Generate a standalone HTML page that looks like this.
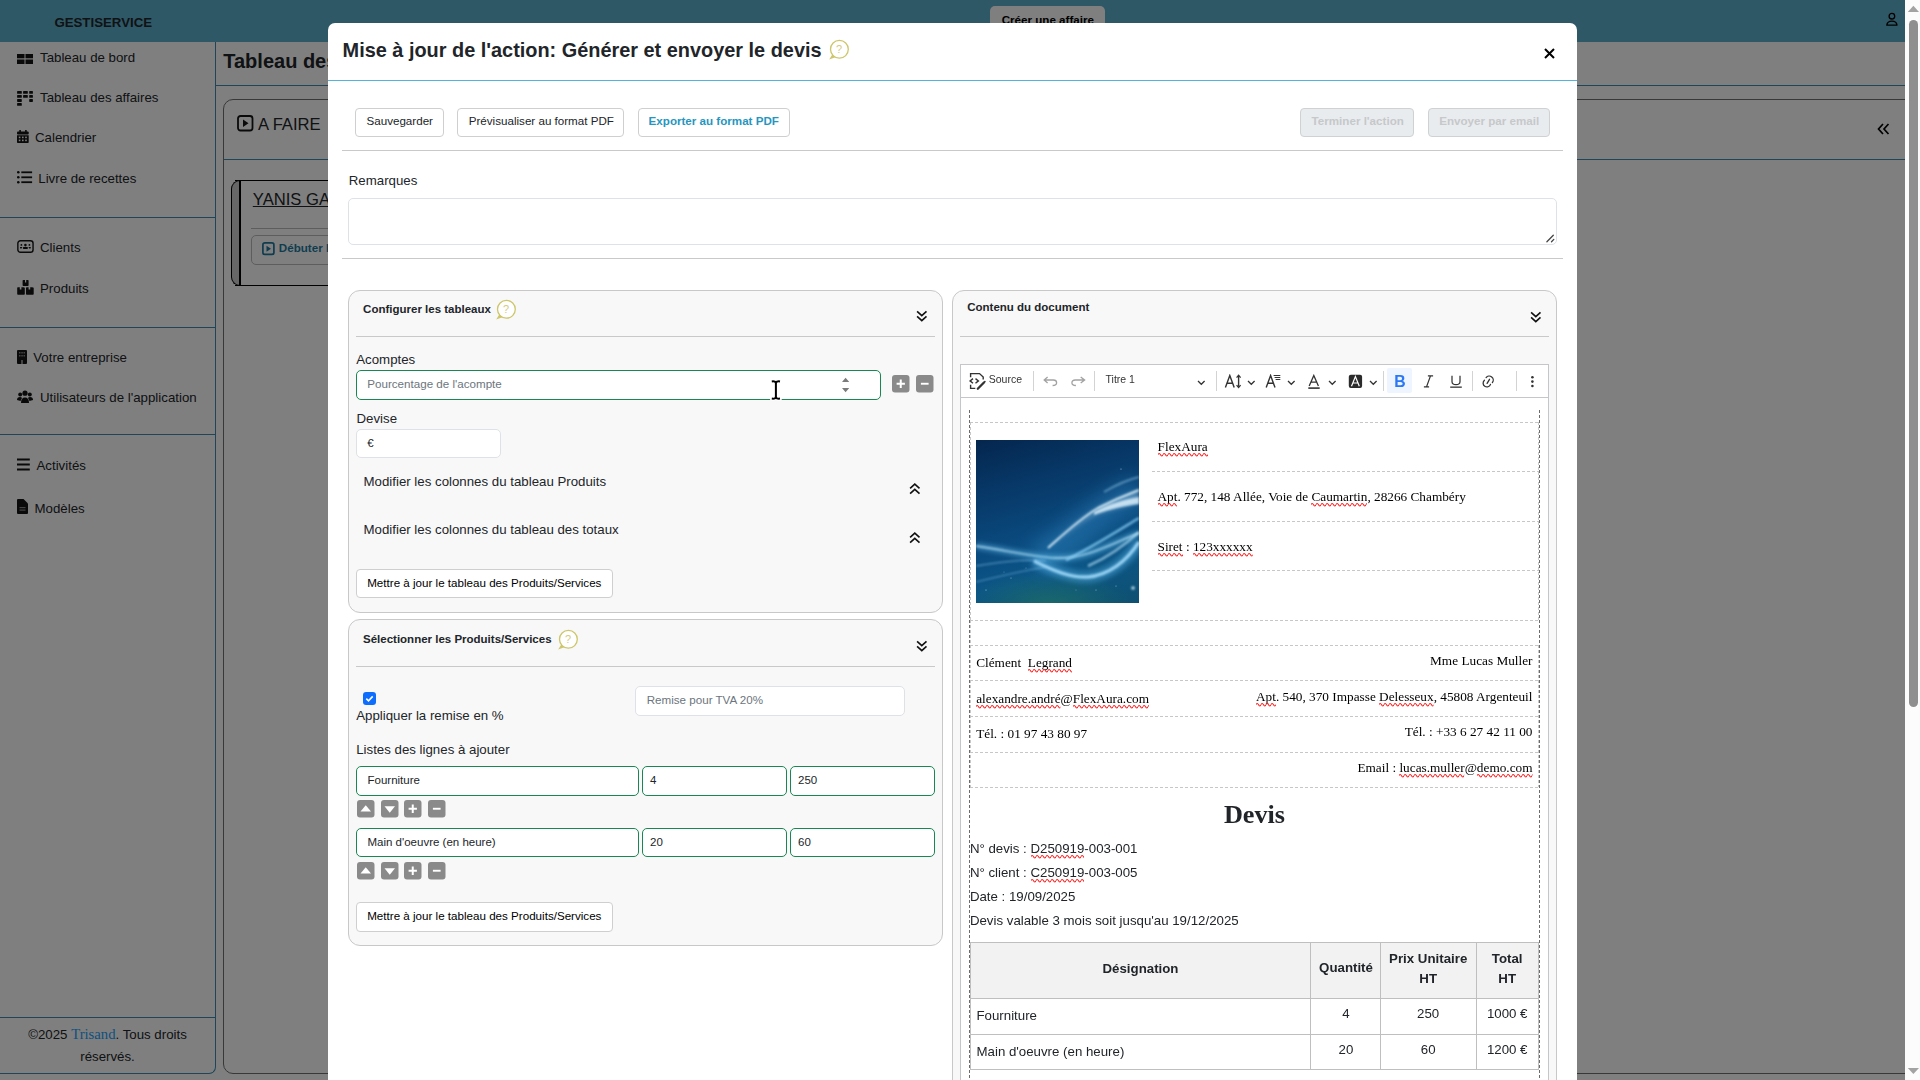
<!DOCTYPE html>
<html><head><meta charset="utf-8"><title>Gestiservice</title>
<style>
html,body{margin:0;padding:0;width:1920px;height:1080px;overflow:hidden;background:#fff;}
body{position:relative;font-family:"Liberation Sans",sans-serif;}
.t{position:absolute;white-space:nowrap;}
.r{position:absolute;box-sizing:border-box;}
.sp{position:relative;}
.wv{position:absolute;left:0;top:14.1px;width:100%;height:4px;overflow:hidden;}
</style></head><body>
<svg width="0" height="0" style="position:absolute;left:0;top:0"><defs><pattern id="wv" width="5" height="4" patternUnits="userSpaceOnUse"><path d="M-0.2 1.6 C0.8 0.2 1.7 0.2 2.5 1.8 C3.3 3.4 4.2 3.4 5.2 1.6" stroke="#ff2020" stroke-width="1.1" fill="none"/></pattern></defs></svg>
<div class="r" style="left:0px;top:0px;width:1905px;height:1080px;background:#fff"></div>
<div class="r" style="left:0px;top:0px;width:1905px;height:42px;background:#5cb0cc"></div>
<div class="t " style="left:54.40px;top:14.90px;font-size:13.25px;line-height:16px;font-weight:700;color:#212529;font-family:'Liberation Sans', sans-serif;">GESTISERVICE</div>
<div class="r" style="left:990px;top:6px;width:115px;height:34px;background:#fff;border-radius:5px"></div>
<div class="t " style="left:1001.70px;top:13.30px;font-size:11.62px;line-height:14px;font-weight:700;color:#000;font-family:'Liberation Sans', sans-serif;">Créer une affaire</div>
<svg class="r" style="left:1884px;top:11px;" width="16" height="17" viewBox="0 0 16 17"><circle cx="7.9" cy="5.2" r="2.8" fill="none" stroke="#000" stroke-width="1.3"/><path d="M2.8 14.2 Q3.3 10.2 7.9 10.2 Q12.5 10.2 13 14.2 Z" fill="none" stroke="#000" stroke-width="1.3" stroke-linejoin="round"/></svg>
<div class="r" style="left:-10px;top:42px;width:226px;height:1032px;border:1px solid #3c8cb0;border-top:none;border-radius:0 0 7px 0"></div>
<div class="r" style="left:0px;top:217px;width:215px;height:1px;background:#3c8cb0"></div>
<div class="r" style="left:0px;top:327px;width:215px;height:1px;background:#3c8cb0"></div>
<div class="r" style="left:0px;top:434px;width:215px;height:1px;background:#3c8cb0"></div>
<div class="r" style="left:0px;top:1017px;width:215px;height:1px;background:#3c8cb0"></div>
<div class="t " style="left:40.00px;top:50.20px;font-size:13.28px;line-height:16px;font-weight:400;color:#212529;font-family:'Liberation Sans', sans-serif;">Tableau de bord</div>
<div class="t " style="left:40.00px;top:90.20px;font-size:13.28px;line-height:16px;font-weight:400;color:#212529;font-family:'Liberation Sans', sans-serif;">Tableau des affaires</div>
<div class="t " style="left:35.00px;top:129.80px;font-size:13.28px;line-height:16px;font-weight:400;color:#212529;font-family:'Liberation Sans', sans-serif;">Calendrier</div>
<div class="t " style="left:38.25px;top:171.05px;font-size:13.28px;line-height:16px;font-weight:400;color:#212529;font-family:'Liberation Sans', sans-serif;">Livre de recettes</div>
<div class="t " style="left:40.00px;top:239.80px;font-size:13.28px;line-height:16px;font-weight:400;color:#212529;font-family:'Liberation Sans', sans-serif;">Clients</div>
<div class="t " style="left:40.00px;top:281.05px;font-size:13.28px;line-height:16px;font-weight:400;color:#212529;font-family:'Liberation Sans', sans-serif;">Produits</div>
<div class="t " style="left:33.25px;top:349.80px;font-size:13.28px;line-height:16px;font-weight:400;color:#212529;font-family:'Liberation Sans', sans-serif;">Votre entreprise</div>
<div class="t " style="left:40.00px;top:390.30px;font-size:13.28px;line-height:16px;font-weight:400;color:#212529;font-family:'Liberation Sans', sans-serif;">Utilisateurs de l'application</div>
<div class="t " style="left:36.50px;top:458.30px;font-size:13.28px;line-height:16px;font-weight:400;color:#212529;font-family:'Liberation Sans', sans-serif;">Activités</div>
<div class="t " style="left:34.50px;top:501.30px;font-size:13.28px;line-height:16px;font-weight:400;color:#212529;font-family:'Liberation Sans', sans-serif;">Modèles</div>
<svg class="r" style="left:17px;top:54px;" width="16" height="10" viewBox="0 0 16 10"><rect x="0" y="0" width="7.5" height="4.3" fill="#141414"/><rect x="8.5" y="0" width="7.5" height="4.3" fill="#141414"/><rect x="0" y="5.5" width="7.5" height="4.5" fill="#141414"/><rect x="8.5" y="5.5" width="7.5" height="4.5" fill="#141414"/></svg>
<svg class="r" style="left:17px;top:90px;" width="16" height="16" viewBox="0 0 16 16"><g fill="#141414"><rect x="0.1" y="0.9" width="4.7" height="2.9" rx="0.6"/><rect x="6.1" y="0.9" width="4.7" height="2.9" rx="0.6"/><rect x="12.2" y="0.9" width="3.7" height="2.9" rx="0.6"/><rect x="0.1" y="5" width="4.7" height="2.8" rx="0.6"/><rect x="6.1" y="5" width="4.7" height="2.8" rx="0.6"/><rect x="12.2" y="5" width="3.7" height="2.8" rx="0.6"/><rect x="0.1" y="9.1" width="4.7" height="2.8" rx="0.6"/><rect x="12.2" y="9.1" width="3.7" height="2.8" rx="0.6"/><rect x="0.1" y="13.1" width="4.7" height="2.7" rx="0.6"/></g></svg>
<svg class="r" style="left:17px;top:130px;" width="12" height="14" viewBox="0 0 12 14"><rect x="2.3" y="0" width="1.6" height="3" fill="#141414"/><rect x="8.1" y="0" width="1.6" height="3" fill="#141414"/><rect x="0" y="1.6" width="11.7" height="3" rx="1" fill="#141414"/><path d="M0 5.3H11.7V12.2Q11.7 13 10.9 13H0.8Q0 13 0 12.2Z" fill="#141414"/><g fill="#fff"><rect x="1.8" y="6.6" width="1.6" height="1.6"/><rect x="5" y="6.6" width="1.6" height="1.6"/><rect x="8.2" y="6.6" width="1.6" height="1.6"/><rect x="1.8" y="9.6" width="1.6" height="1.6"/><rect x="5" y="9.6" width="1.6" height="1.6"/><rect x="8.2" y="9.6" width="1.6" height="1.6"/></g></svg>
<svg class="r" style="left:17px;top:171px;" width="16" height="13" viewBox="0 0 16 13"><circle cx="1.3" cy="1.3" r="1.3" fill="#141414"/><circle cx="1.3" cy="6.3" r="1.3" fill="#141414"/><circle cx="1.3" cy="11.2" r="1.3" fill="#141414"/><rect x="4.3" y="0.4" width="10.8" height="1.8" fill="#141414"/><rect x="4.3" y="5.4" width="10.8" height="1.8" fill="#141414"/><rect x="4.3" y="10.3" width="10.8" height="1.8" fill="#141414"/></svg>
<svg class="r" style="left:17px;top:239px;" width="17" height="15" viewBox="0 0 17 15"><rect x="0.85" y="1.75" width="15.2" height="11.5" rx="2.6" fill="none" stroke="#141414" stroke-width="1.4"/><g fill="#141414"><circle cx="8.4" cy="6.1" r="1.3"/><circle cx="4.4" cy="5.9" r="0.9"/><circle cx="12.4" cy="5.9" r="0.9"/><rect x="5.9" y="8" width="5" height="2" rx="0.8"/><path d="M3 8H5.3L4.6 9.6H3.2Z"/><path d="M11.5 8H13.8L13.6 9.6H12.2Z"/></g></svg>
<svg class="r" style="left:17px;top:279px;" width="17" height="17" viewBox="0 0 17 17"><g fill="#141414"><path d="M5.6 1.6Q5.6 1 6.4 1H8V3.4H9.2V1H10.8Q11.6 1 11.6 1.6V6.2Q11.6 7 10.8 7H6.4Q5.6 7 5.6 6.2Z"/><path d="M0.2 8.8Q0.2 8.2 1 8.2H2.8V10.6H4.4V8.2H6.2Q7.8 8.2 7.8 9V15Q7.8 15.8 7 15.8H1Q0.2 15.8 0.2 15Z"/><path d="M9 9Q9 8.2 9.8 8.2H11.6V10.6H13.2V8.2H15Q16.7 8.2 16.7 9V15Q16.7 15.8 15.9 15.8H9.8Q9 15.8 9 15Z"/></g></svg>
<svg class="r" style="left:17px;top:350px;" width="10" height="14" viewBox="0 0 10 14"><rect x="0" y="0" width="10" height="14" rx="1" fill="#141414"/><g fill="#888"><rect x="2" y="2" width="1.5" height="1.5"/><rect x="4.3" y="2" width="1.5" height="1.5"/><rect x="6.5" y="2" width="1.5" height="1.5"/><rect x="2" y="5" width="1.5" height="1.5"/><rect x="4.3" y="5" width="1.5" height="1.5"/><rect x="6.5" y="5" width="1.5" height="1.5"/><rect x="4" y="10" width="2" height="4"/></g></svg>
<svg class="r" style="left:17px;top:390px;" width="16" height="14" viewBox="0 0 16 14"><circle cx="8" cy="3.2" r="2.6" fill="#141414"/><circle cx="3.2" cy="4.5" r="2" fill="#141414"/><circle cx="12.8" cy="4.5" r="2" fill="#141414"/><path d="M4 13Q4 7.5 8 7.5Q12 7.5 12 13Z" fill="#141414"/><path d="M0 10Q0 7 3 7Q4.5 7 5 8L3.5 11Z" fill="#141414"/><path d="M16 10Q16 7 13 7Q11.5 7 11 8L12.5 11Z" fill="#141414"/></svg>
<svg class="r" style="left:17px;top:458px;" width="13" height="13" viewBox="0 0 13 13"><rect x="0" y="0.5" width="12.8" height="2" fill="#141414"/><rect x="0" y="5.5" width="12.8" height="2" fill="#141414"/><rect x="0" y="10.5" width="12.8" height="2" fill="#141414"/></svg>
<svg class="r" style="left:17px;top:499px;" width="11" height="15" viewBox="0 0 11 15"><path d="M0 1Q0 0 1 0H6.5L11 4.5V14Q11 15 10 15H1Q0 15 0 14Z" fill="#141414"/><g fill="#888"><rect x="2.5" y="8" width="6" height="1.2"/><rect x="2.5" y="10.5" width="6" height="1.2"/></g></svg>
<div class="t" style="left:0;top:1023.2px;width:215px;text-align:center;font-size:13.28px;line-height:22px;color:#212529;white-space:normal">©2025 <span style="font-family:'Liberation Serif',serif;color:#1aa0ff;font-size:14.7px">Trisand</span>. Tous droits<br>réservés.</div>
<div class="t " style="left:223.25px;top:48.80px;font-size:20px;line-height:24px;font-weight:700;color:#212529;font-family:'Liberation Sans', sans-serif;">Tableau des affaires</div>
<div class="r" style="left:216px;top:85px;width:1689px;height:1px;background:#3c8cb0"></div>
<div class="r" style="left:223px;top:99px;width:1702px;height:975px;border:1px solid #707070;border-radius:10px"></div>
<div class="r" style="left:224px;top:159px;width:1681px;height:1px;background:#3c8cb0"></div>
<svg class="r" style="left:237px;top:115px;" width="17" height="17" viewBox="0 0 17 17"><rect x="1" y="1" width="14.5" height="14.5" rx="2.5" fill="none" stroke="#141414" stroke-width="1.8"/><path d="M6 4.5L11.5 8.2L6 12Z" fill="#141414"/></svg>
<div class="t " style="left:257.90px;top:115.30px;font-size:16.6px;line-height:20px;font-weight:400;color:#212529;font-family:'Liberation Sans', sans-serif;">A FAIRE</div>
<svg class="r" style="left:1877px;top:123px;" width="13" height="12" viewBox="0 0 13 12"><path d="M6 1L1.5 6L6 11M11.5 1L7 6L11.5 11" fill="none" stroke="#000" stroke-width="1.7"/></svg>
<div class="r" style="left:235px;top:180px;width:965px;height:106px;border:1px solid #000;border-left:none;border-radius:0"></div>
<div class="r" style="left:231px;top:180px;width:10px;height:106px;background:#cfcfcf;border:1px solid #000;border-right:none;border-radius:9px 0 0 9px"></div>
<div class="r" style="left:239px;top:180px;width:2px;height:106px;background:#000"></div>
<div class="t " style="left:252.80px;top:190.30px;font-size:16.6px;line-height:20px;font-weight:400;color:#212529;font-family:'Liberation Sans', sans-serif;"><u>YANIS GARNIER</u></div>
<div class="r" style="left:251px;top:228px;width:949px;height:1px;background:#bbb"></div>
<div class="r" style="left:251px;top:235px;width:169px;height:30px;border:1px solid #bbb;border-radius:5px"></div>
<svg class="r" style="left:262px;top:242px;" width="13" height="14" viewBox="0 0 13 14"><rect x="0.9" y="0.9" width="11" height="11.5" rx="2" fill="none" stroke="#1f7aa0" stroke-width="1.7"/><path d="M4.5 3.7L9 6.7L4.5 9.7Z" fill="#1f7aa0"/></svg>
<div class="t " style="left:278.80px;top:241.10px;font-size:11.62px;line-height:14px;font-weight:700;color:#1f7aa0;font-family:'Liberation Sans', sans-serif;">Débuter l'action</div>
<div class="r" style="left:0px;top:0px;width:1905px;height:1080px;background:rgba(0,0,0,0.5)"></div>
<div class="r" style="left:1905px;top:0px;width:15px;height:1080px;background:#fcfcfc"></div>
<svg class="r" style="left:1905px;top:0px;" width="15" height="1080" viewBox="0 0 15 1080"><path d="M2.8 11.9L8.4 5.8L14 11.9Z" fill="#a3a3a3"/><rect x="4" y="20" width="9" height="687" rx="4.5" fill="#8f8f8f"/><path d="M2.8 1068L8.4 1074.1L14 1068Z" fill="#a3a3a3"/></svg>
<div class="r" style="left:328px;top:23px;width:1249px;height:1077px;background:#fff;border-radius:7px 7px 0 0"></div>
<div class="t " style="left:342.60px;top:38.10px;font-size:19.9px;line-height:24px;font-weight:700;color:#212529;font-family:'Liberation Sans', sans-serif;">Mise à jour de l'action: Générer et envoyer le devis</div>
<svg class="r" style="left:829.05px;top:39.0px;" width="22" height="22" viewBox="0 0 22 22"><circle cx="10.4" cy="10.3" r="8.9" fill="#fff" stroke="#cdc66a" stroke-width="1.3"/><path d="M3.3 15.6L0.2 20.6L6.4 18.2Z" fill="#cdc66a"/><text x="10.1" y="14.1" font-family="Liberation Sans" font-size="11" fill="#d3cc7e" text-anchor="middle">?</text></svg>
<svg class="r" style="left:1543.5px;top:47.8px;" width="11" height="11" viewBox="0 0 11 11"><path d="M1 1L10 10M10 1L1 10" stroke="#000" stroke-width="2"/></svg>
<div class="r" style="left:328px;top:80px;width:1249px;height:1px;background:#55b3d9"></div>
<div class="r" style="left:355px;top:108px;width:89px;height:29px;background:#fff;border:1px solid #cfcfcf;border-radius:4px"></div>
<div class="t " style="left:366.50px;top:113.75px;font-size:11.62px;line-height:14px;font-weight:400;color:#212529;font-family:'Liberation Sans', sans-serif;">Sauvegarder</div>
<div class="r" style="left:457px;top:108px;width:167px;height:29px;background:#fff;border:1px solid #cfcfcf;border-radius:4px"></div>
<div class="t " style="left:468.75px;top:113.75px;font-size:11.62px;line-height:14px;font-weight:400;color:#212529;font-family:'Liberation Sans', sans-serif;">Prévisualiser au format PDF</div>
<div class="r" style="left:638px;top:108px;width:152px;height:29px;background:#fff;border:1px solid #cfcfcf;border-radius:4px"></div>
<div class="t " style="left:648.60px;top:113.75px;font-size:11.62px;line-height:14px;font-weight:700;color:#2596c0;font-family:'Liberation Sans', sans-serif;">Exporter au format PDF</div>
<div class="r" style="left:1300px;top:108px;width:114px;height:29px;background:#e9ecef;border:1px solid #cfd1d3;border-radius:4px"></div>
<div class="t " style="left:1311.60px;top:113.75px;font-size:11.62px;line-height:14px;font-weight:700;color:#c6c8ca;font-family:'Liberation Sans', sans-serif;">Terminer l'action</div>
<div class="r" style="left:1428px;top:108px;width:122px;height:29px;background:#e9ecef;border:1px solid #cfd1d3;border-radius:4px"></div>
<div class="t " style="left:1439.20px;top:113.75px;font-size:11.62px;line-height:14px;font-weight:700;color:#c6c8ca;font-family:'Liberation Sans', sans-serif;">Envoyer par email</div>
<div class="r" style="left:342px;top:150px;width:1221px;height:1px;background:#c9c9c9"></div>
<div class="t " style="left:348.75px;top:172.90px;font-size:13.28px;line-height:16px;font-weight:400;color:#212529;font-family:'Liberation Sans', sans-serif;">Remarques</div>
<div class="r" style="left:348px;top:198px;width:1209px;height:47px;background:#fff;border:1px solid #dee2e6;border-radius:5px"></div>
<svg class="r" style="left:1545px;top:233px;" width="10" height="10" viewBox="0 0 10 10"><path d="M1.9 8.8L8.3 2.3M6.5 8.8L8.8 6.4" stroke="#444" stroke-width="1.3" stroke-linecap="round"/></svg>
<div class="r" style="left:342px;top:258px;width:1221px;height:1px;background:#c9c9c9"></div>
<div class="r" style="left:348px;top:290px;width:595px;height:323px;background:#f8f8f8;border:1px solid #c8c8c8;border-radius:12px"></div>
<div class="t " style="left:363.10px;top:302.10px;font-size:11.5px;line-height:14px;font-weight:700;color:#212529;font-family:'Liberation Sans', sans-serif;">Configurer les tableaux</div>
<svg class="r" style="left:496.15px;top:299px;" width="22" height="22" viewBox="0 0 22 22"><circle cx="10.4" cy="10.3" r="8.9" fill="#fff" stroke="#cdc66a" stroke-width="1.3"/><path d="M3.3 15.6L0.2 20.6L6.4 18.2Z" fill="#cdc66a"/><text x="10.1" y="14.1" font-family="Liberation Sans" font-size="11" fill="#d3cc7e" text-anchor="middle">?</text></svg>
<svg class="r" style="left:916.0px;top:310.3px;" width="12" height="12" viewBox="0 0 12 12"><path d="M1.1 1.3L5.8 5.6L10.5 1.3M1.1 6.4L5.8 10.7L10.5 6.4" fill="none" stroke="#111" stroke-width="1.6"/></svg>
<div class="r" style="left:356px;top:336px;width:579px;height:1px;background:#c9c9c9"></div>
<div class="t " style="left:356.25px;top:351.50px;font-size:13.28px;line-height:16px;font-weight:400;color:#212529;font-family:'Liberation Sans', sans-serif;">Acomptes</div>
<div class="r" style="left:356px;top:370px;width:525px;height:30px;background:#fff;border:1px solid #198754;border-radius:5px"></div>
<div class="t " style="left:367.25px;top:376.60px;font-size:11.62px;line-height:14px;font-weight:400;color:#6c757d;font-family:'Liberation Sans', sans-serif;">Pourcentage de l'acompte</div>
<svg class="r" style="left:841px;top:377px;" width="10" height="16" viewBox="0 0 10 16"><path d="M1 5L4.6 0.8L8.2 5Z M1 11L4.6 15.2L8.2 11Z" fill="#7b7b7b"/></svg>
<svg class="r" style="left:769px;top:378px;" width="14" height="23" viewBox="0 0 14 23"><path d="M2.8 3.4Q6.9 2.8 6.9 5.6V18.4Q6.9 21.2 2.8 20.6M11 3.4Q6.9 2.8 6.9 5.6M11 20.6Q6.9 21.2 6.9 18.4" fill="none" stroke="#fff" stroke-width="4" stroke-linecap="round"/><path d="M2.8 3.4Q6.9 2.8 6.9 5.6V18.4Q6.9 21.2 2.8 20.6M11 3.4Q6.9 2.8 6.9 5.6M11 20.6Q6.9 21.2 6.9 18.4" fill="none" stroke="#000" stroke-width="2"/></svg>
<svg class="r" style="left:892px;top:375.2px;" width="17.5" height="17.5" viewBox="0 0 17.5 17.5"><rect x="0" y="0" width="17.5" height="17.5" rx="3" fill="#8a8a8a"/><path d="M8.75 4.6V12.9M4.6 8.75H12.9" stroke="#fff" stroke-width="2"/></svg>
<svg class="r" style="left:916px;top:375.2px;" width="17.5" height="17.5" viewBox="0 0 17.5 17.5"><rect x="0" y="0" width="17.5" height="17.5" rx="3" fill="#8a8a8a"/><path d="M4.9 8.75H12.6" stroke="#fff" stroke-width="1.9"/></svg>
<div class="t " style="left:356.50px;top:410.60px;font-size:13.28px;line-height:16px;font-weight:400;color:#212529;font-family:'Liberation Sans', sans-serif;">Devise</div>
<div class="r" style="left:356px;top:429px;width:145px;height:29px;background:#fff;border:1px solid #dee2e6;border-radius:5px"></div>
<div class="t " style="left:367.25px;top:435.90px;font-size:11.5px;line-height:14px;font-weight:400;color:#212529;font-family:'Liberation Sans', sans-serif;">€</div>
<div class="t " style="left:363.50px;top:473.75px;font-size:13.28px;line-height:16px;font-weight:400;color:#212529;font-family:'Liberation Sans', sans-serif;">Modifier les colonnes du tableau Produits</div>
<svg class="r" style="left:908.5px;top:483.2px;" width="12" height="12" viewBox="0 0 12 12"><path d="M1.1 5.4L5.8 1.1L10.5 5.4M1.1 10.6L5.8 6.3L10.5 10.6" fill="none" stroke="#111" stroke-width="1.6"/></svg>
<div class="t " style="left:363.50px;top:521.60px;font-size:13.28px;line-height:16px;font-weight:400;color:#212529;font-family:'Liberation Sans', sans-serif;">Modifier les colonnes du tableau des totaux</div>
<svg class="r" style="left:908.5px;top:531.8px;" width="12" height="12" viewBox="0 0 12 12"><path d="M1.1 5.4L5.8 1.1L10.5 5.4M1.1 10.6L5.8 6.3L10.5 10.6" fill="none" stroke="#111" stroke-width="1.6"/></svg>
<div class="r" style="left:356px;top:569px;width:257px;height:29px;background:#fff;border:1px solid #cfcfcf;border-radius:4px"></div>
<div class="t " style="left:367.20px;top:575.70px;font-size:11.62px;line-height:14px;font-weight:400;color:#000;font-family:'Liberation Sans', sans-serif;">Mettre à jour le tableau des Produits/Services</div>
<div class="r" style="left:348px;top:619px;width:595px;height:327px;background:#f8f8f8;border:1px solid #c8c8c8;border-radius:12px"></div>
<div class="t " style="left:363.00px;top:632.30px;font-size:11.5px;line-height:14px;font-weight:700;color:#212529;font-family:'Liberation Sans', sans-serif;">Sélectionner les Produits/Services</div>
<svg class="r" style="left:558.05px;top:629px;" width="22" height="22" viewBox="0 0 22 22"><circle cx="10.4" cy="10.3" r="8.9" fill="#fff" stroke="#cdc66a" stroke-width="1.3"/><path d="M3.3 15.6L0.2 20.6L6.4 18.2Z" fill="#cdc66a"/><text x="10.1" y="14.1" font-family="Liberation Sans" font-size="11" fill="#d3cc7e" text-anchor="middle">?</text></svg>
<svg class="r" style="left:915.8px;top:640px;" width="12" height="12" viewBox="0 0 12 12"><path d="M1.1 1.3L5.8 5.6L10.5 1.3M1.1 6.4L5.8 10.7L10.5 6.4" fill="none" stroke="#111" stroke-width="1.6"/></svg>
<div class="r" style="left:356px;top:666px;width:579px;height:1px;background:#c9c9c9"></div>
<svg class="r" style="left:363px;top:692px;" width="13" height="13" viewBox="0 0 13 13"><rect x="0" y="0" width="13" height="13" rx="3" fill="#0d6efd"/><path d="M3.3 6.6L5.5 8.8L9.7 4.4" fill="none" stroke="#fff" stroke-width="1.6"/></svg>
<div class="t " style="left:356.20px;top:707.80px;font-size:13.28px;line-height:16px;font-weight:400;color:#212529;font-family:'Liberation Sans', sans-serif;">Appliquer la remise en %</div>
<div class="r" style="left:635px;top:686px;width:270px;height:30px;background:#fff;border:1px solid #dee2e6;border-radius:5px"></div>
<div class="t " style="left:646.70px;top:692.70px;font-size:11.62px;line-height:14px;font-weight:400;color:#6c757d;font-family:'Liberation Sans', sans-serif;">Remise pour TVA 20%</div>
<div class="t " style="left:356.20px;top:741.70px;font-size:13.28px;line-height:16px;font-weight:400;color:#212529;font-family:'Liberation Sans', sans-serif;">Listes des lignes à ajouter</div>
<div class="r" style="left:356px;top:766px;width:283px;height:30px;background:#fff;border:1px solid #198754;border-radius:5px"></div>
<div class="r" style="left:642px;top:766px;width:145px;height:30px;background:#fff;border:1px solid #198754;border-radius:5px"></div>
<div class="r" style="left:790px;top:766px;width:145px;height:30px;background:#fff;border:1px solid #198754;border-radius:5px"></div>
<div class="t " style="left:367.50px;top:773.00px;font-size:11.5px;line-height:14px;font-weight:400;color:#212529;font-family:'Liberation Sans', sans-serif;">Fourniture</div>
<div class="t " style="left:650.00px;top:773.00px;font-size:11.5px;line-height:14px;font-weight:400;color:#212529;font-family:'Liberation Sans', sans-serif;">4</div>
<div class="t " style="left:798.00px;top:773.00px;font-size:11.5px;line-height:14px;font-weight:400;color:#212529;font-family:'Liberation Sans', sans-serif;">250</div>
<svg class="r" style="left:357px;top:800.2px;" width="17.5" height="17.5" viewBox="0 0 17.5 17.5"><rect x="0" y="0" width="17.5" height="17.5" rx="3" fill="#8a8a8a"/><path d="M3.5 11.6L8.75 5.2L14 11.6Z" fill="#fff"/></svg>
<svg class="r" style="left:381px;top:800.2px;" width="17.5" height="17.5" viewBox="0 0 17.5 17.5"><rect x="0" y="0" width="17.5" height="17.5" rx="3" fill="#8a8a8a"/><path d="M3.5 6.3L8.75 12.7L14 6.3Z" fill="#fff"/></svg>
<svg class="r" style="left:404px;top:800.2px;" width="17.5" height="17.5" viewBox="0 0 17.5 17.5"><rect x="0" y="0" width="17.5" height="17.5" rx="3" fill="#8a8a8a"/><path d="M8.75 4.6V12.9M4.6 8.75H12.9" stroke="#fff" stroke-width="2"/></svg>
<svg class="r" style="left:428px;top:800.2px;" width="17.5" height="17.5" viewBox="0 0 17.5 17.5"><rect x="0" y="0" width="17.5" height="17.5" rx="3" fill="#8a8a8a"/><path d="M4.9 8.75H12.6" stroke="#fff" stroke-width="1.9"/></svg>
<div class="r" style="left:356px;top:828px;width:283px;height:29px;background:#fff;border:1px solid #198754;border-radius:5px"></div>
<div class="r" style="left:642px;top:828px;width:145px;height:29px;background:#fff;border:1px solid #198754;border-radius:5px"></div>
<div class="r" style="left:790px;top:828px;width:145px;height:29px;background:#fff;border:1px solid #198754;border-radius:5px"></div>
<div class="t " style="left:367.50px;top:835.00px;font-size:11.5px;line-height:14px;font-weight:400;color:#212529;font-family:'Liberation Sans', sans-serif;">Main d'oeuvre (en heure)</div>
<div class="t " style="left:650.00px;top:835.00px;font-size:11.5px;line-height:14px;font-weight:400;color:#212529;font-family:'Liberation Sans', sans-serif;">20</div>
<div class="t " style="left:798.00px;top:835.00px;font-size:11.5px;line-height:14px;font-weight:400;color:#212529;font-family:'Liberation Sans', sans-serif;">60</div>
<svg class="r" style="left:357px;top:862.2px;" width="17.5" height="17.5" viewBox="0 0 17.5 17.5"><rect x="0" y="0" width="17.5" height="17.5" rx="3" fill="#8a8a8a"/><path d="M3.5 11.6L8.75 5.2L14 11.6Z" fill="#fff"/></svg>
<svg class="r" style="left:381px;top:862.2px;" width="17.5" height="17.5" viewBox="0 0 17.5 17.5"><rect x="0" y="0" width="17.5" height="17.5" rx="3" fill="#8a8a8a"/><path d="M3.5 6.3L8.75 12.7L14 6.3Z" fill="#fff"/></svg>
<svg class="r" style="left:404px;top:862.2px;" width="17.5" height="17.5" viewBox="0 0 17.5 17.5"><rect x="0" y="0" width="17.5" height="17.5" rx="3" fill="#8a8a8a"/><path d="M8.75 4.6V12.9M4.6 8.75H12.9" stroke="#fff" stroke-width="2"/></svg>
<svg class="r" style="left:428px;top:862.2px;" width="17.5" height="17.5" viewBox="0 0 17.5 17.5"><rect x="0" y="0" width="17.5" height="17.5" rx="3" fill="#8a8a8a"/><path d="M4.9 8.75H12.6" stroke="#fff" stroke-width="1.9"/></svg>
<div class="r" style="left:356px;top:902px;width:257px;height:30px;background:#fff;border:1px solid #cfcfcf;border-radius:4px"></div>
<div class="t " style="left:367.20px;top:908.70px;font-size:11.62px;line-height:14px;font-weight:400;color:#000;font-family:'Liberation Sans', sans-serif;">Mettre à jour le tableau des Produits/Services</div>
<div class="r" style="left:952px;top:290px;width:605px;height:910px;background:#f8f8f8;border:1px solid #c8c8c8;border-radius:12px"></div>
<div class="t " style="left:967.25px;top:300.00px;font-size:11.5px;line-height:14px;font-weight:700;color:#212529;font-family:'Liberation Sans', sans-serif;">Contenu du document</div>
<svg class="r" style="left:1529.5px;top:310.5px;" width="12" height="12" viewBox="0 0 12 12"><path d="M1.1 1.3L5.8 5.6L10.5 1.3M1.1 6.4L5.8 10.7L10.5 6.4" fill="none" stroke="#111" stroke-width="1.6"/></svg>
<div class="r" style="left:960px;top:336px;width:589px;height:1px;background:#c9c9c9"></div>
<div style="position:absolute;left:0;top:0;width:1920px;height:1080px;will-change:transform;pointer-events:none">
<div class="r" style="left:960px;top:364px;width:589px;height:836px;background:#fff;border:1px solid #c4c6ca"></div>
<div class="r" style="left:960px;top:397px;width:589px;height:1px;background:#c4c6ca"></div>
<svg class="r" style="left:968px;top:372px;" width="20" height="19" viewBox="0 0 20 19"><path d="M2.6 5.2V1.6H11.5L15.2 5V7.6M2.6 12.8V16.4H7.3" fill="none" stroke="#333" stroke-width="1.4" stroke-linejoin="miter"/><path d="M5 6.6L2.1 8.9L5 11.2M7.5 6.6L10.4 8.9L7.5 11.2" fill="none" stroke="#333" stroke-width="1.4"/><path d="M9.8 16.7L15.7 10.8" stroke="#333" stroke-width="2.3" stroke-linecap="round"/><path d="M16 10.5L16.9 9.6" stroke="#333" stroke-width="1.6" stroke-linecap="round"/></svg>
<div class="t " style="left:988.75px;top:372.60px;font-size:10.5px;line-height:13px;font-weight:400;color:#333;font-family:'Liberation Sans', sans-serif;">Source</div>
<div class="r" style="left:1033px;top:371px;width:1px;height:20px;background:#d3d3d3"></div>
<svg class="r" style="left:1042px;top:375px;" width="16" height="12" viewBox="0 0 16 12"><path d="M5.6 2.1L2.2 5L5.6 7.9M2.2 5H11.3C13.4 5 14.6 6.2 14.6 7.8C14.6 9.4 13.3 10.5 10.6 10.5" fill="none" stroke="#a2a2a2" stroke-width="1.3"/></svg>
<svg class="r" style="left:1070px;top:375px;" width="16" height="12" viewBox="0 0 16 12"><path d="M10.7 2.1L14.6 5L10.7 7.9M14.6 5H5.2C3.1 5 1.9 6.2 1.9 7.8C1.9 9.4 3.2 10.5 5.9 10.5" fill="none" stroke="#a2a2a2" stroke-width="1.3"/></svg>
<div class="r" style="left:1094px;top:371px;width:1px;height:20px;background:#d3d3d3"></div>
<div class="t " style="left:1105.60px;top:372.60px;font-size:10.5px;line-height:13px;font-weight:400;color:#333;font-family:'Liberation Sans', sans-serif;">Titre 1</div>
<svg class="r" style="left:1197px;top:379.5px;" width="9" height="6" viewBox="0 0 9 6"><path d="M1 1L4.3 4.3L7.6 1" fill="none" stroke="#333" stroke-width="1.3"/></svg>
<div class="r" style="left:1216px;top:371px;width:1px;height:20px;background:#d3d3d3"></div>
<svg class="r" style="left:1224px;top:374px;" width="19" height="15" viewBox="0 0 19 15"><path d="M1.4 13.6L5.8 1.5L10.2 13.6M3 9.3H8.6" fill="none" stroke="#333" stroke-width="1.4"/><path d="M14.6 2V12.8" stroke="#333" stroke-width="1.4"/><path d="M12.6 3.6L14.6 1.2L16.6 3.6M12.6 11.2L14.6 13.6L16.6 11.2" fill="none" stroke="#333" stroke-width="1.3"/></svg>
<svg class="r" style="left:1247px;top:379.5px;" width="9" height="6" viewBox="0 0 9 6"><path d="M1 1L4.3 4.3L7.6 1" fill="none" stroke="#333" stroke-width="1.3"/></svg>
<svg class="r" style="left:1265px;top:374px;" width="17" height="15" viewBox="0 0 17 15"><path d="M1.2 13.6L5.6 1.5L10 13.6M2.8 9.3H8.4" fill="none" stroke="#333" stroke-width="1.4"/><path d="M8.6 1.5H15.3M9.6 3.5H15.3M10.6 5.5H15.3" stroke="#333" stroke-width="1.1"/></svg>
<svg class="r" style="left:1287px;top:379.5px;" width="9" height="6" viewBox="0 0 9 6"><path d="M1 1L4.3 4.3L7.6 1" fill="none" stroke="#333" stroke-width="1.3"/></svg>
<svg class="r" style="left:1308px;top:374px;" width="13" height="16" viewBox="0 0 13 16"><path d="M1.2 12L5.8 1.5L10.4 12M3 8.2H8.6" fill="none" stroke="#333" stroke-width="1.3"/><rect x="0.3" y="13.3" width="11.4" height="1.6" fill="#333"/></svg>
<svg class="r" style="left:1328px;top:379.5px;" width="9" height="6" viewBox="0 0 9 6"><path d="M1 1L4.3 4.3L7.6 1" fill="none" stroke="#333" stroke-width="1.3"/></svg>
<svg class="r" style="left:1348px;top:374px;" width="15" height="15" viewBox="0 0 15 15"><rect x="0.8" y="0.8" width="13.3" height="13.3" rx="2" fill="#2b2b2b"/><path d="M3.5 12.2L7.4 2.6L11.3 12.2M4.8 9H10" fill="none" stroke="#fff" stroke-width="1.2"/></svg>
<svg class="r" style="left:1369px;top:379.5px;" width="9" height="6" viewBox="0 0 9 6"><path d="M1 1L4.3 4.3L7.6 1" fill="none" stroke="#333" stroke-width="1.3"/></svg>
<div class="r" style="left:1383px;top:371px;width:1px;height:20px;background:#d3d3d3"></div>
<div class="r" style="left:1387px;top:368px;width:25px;height:25px;background:#eef5ff;border-radius:2px"></div>
<div class="t " style="left:1394.30px;top:372.20px;font-size:15.8px;line-height:19px;font-weight:700;color:#2a78f6;font-family:'Liberation Sans', sans-serif;">B</div>
<svg class="r" style="left:1422px;top:374px;" width="13" height="15" viewBox="0 0 13 15"><path d="M5.9 1.9H11.1M1.9 12.9H7.1M8.5 1.9L4.5 12.9" fill="none" stroke="#333" stroke-width="1.25"/></svg>
<svg class="r" style="left:1449px;top:374px;" width="14" height="16" viewBox="0 0 14 16"><path d="M3 1.8V7.4Q3 10.6 7 10.6Q11 10.6 11 7.4V1.8" fill="none" stroke="#333" stroke-width="1.25"/><rect x="1.2" y="12.5" width="11.6" height="1.3" fill="#333"/></svg>
<div class="r" style="left:1472px;top:371px;width:1px;height:20px;background:#d3d3d3"></div>
<svg class="r" style="left:1480px;top:373px;" width="16" height="16" viewBox="0 0 16 16"><path d="M6.1 4.6A3.9 3.9 0 1 1 12.4 9.5M4.4 7.3A3.8 3.8 0 1 0 10.5 11.4M9.5 6.3L7.1 10.4" fill="none" stroke="#333" stroke-width="1.3" stroke-linecap="round"/></svg>
<div class="r" style="left:1516px;top:371px;width:1px;height:20px;background:#d3d3d3"></div>
<svg class="r" style="left:1529.5px;top:373px;" width="5" height="17" viewBox="0 0 5 17"><circle cx="2.4" cy="4.2" r="1.3" fill="#333"/><circle cx="2.4" cy="8.6" r="1.3" fill="#333"/><circle cx="2.4" cy="13" r="1.3" fill="#333"/></svg>
<div class="r" style="left:969px;top:410px;width:1px;height:670px;background:repeating-linear-gradient(to bottom,#6b6b6b 0 3px,transparent 3px 5px)"></div>
<div class="r" style="left:1539px;top:410px;width:1px;height:670px;background:repeating-linear-gradient(to bottom,#6b6b6b 0 3px,transparent 3px 5px)"></div>
<div class="r" style="left:970px;top:422px;width:569px;height:1px;background:repeating-linear-gradient(to right,#c7c7c7 0 3px,transparent 3px 5px)"></div>
<div class="r" style="left:970px;top:422px;width:1px;height:198px;background:repeating-linear-gradient(to bottom,#c7c7c7 0 3px,transparent 3px 5px)"></div>
<div class="r" style="left:1538px;top:422px;width:1px;height:198px;background:repeating-linear-gradient(to bottom,#c7c7c7 0 3px,transparent 3px 5px)"></div>
<div class="r" style="left:976px;top:440px;width:163px;height:163px;overflow:hidden;background:linear-gradient(165deg,#04264e 0%,#073766 25%,#0a4a7e 55%,#0c5686 75%,#0e5070 100%)"><svg width="163" height="163" viewBox="0 0 163 163" style="position:absolute;left:0;top:0"><defs><filter id="b1" filterUnits="userSpaceOnUse" x="-20" y="-20" width="203" height="203"><feGaussianBlur stdDeviation="0.9"/></filter><filter id="b2" filterUnits="userSpaceOnUse" x="-20" y="-20" width="203" height="203"><feGaussianBlur stdDeviation="2.4"/></filter><filter id="b3" filterUnits="userSpaceOnUse" x="-40" y="-40" width="243" height="243"><feGaussianBlur stdDeviation="9"/></filter><radialGradient id="rg1" cx="0.45" cy="1" r="0.5"><stop offset="0" stop-color="#1f6e66" stop-opacity="0.75"/><stop offset="1" stop-color="#1f6e66" stop-opacity="0"/></radialGradient></defs><rect x="0" y="100" width="163" height="63" fill="url(#rg1)"/><path d="M60 120 C90 105 120 70 163 50" stroke="#3f9ede" stroke-width="30" fill="none" opacity="0.3" filter="url(#b3)"/><path d="M0 106 C30 110 55 117 80 118 C110 119 135 104 163 93" stroke="#6cc2f2" stroke-width="6" fill="none" opacity="0.5" filter="url(#b2)"/><path d="M0 106 C30 110 55 117 80 118 C110 119 135 104 163 93" stroke="#c6ecff" stroke-width="1.4" fill="none" opacity="0.8" filter="url(#b1)"/><path d="M72 108 C90 92 105 78 122 68 C138 60 150 55 163 50 L163 63 C148 66 135 70 122 74 C105 82 90 95 72 108Z" fill="#bfe6ff" opacity="0.35" filter="url(#b2)"/><path d="M72 108 C90 92 105 78 122 68 C138 60 150 55 163 50" stroke="#e6f7ff" stroke-width="2" fill="none" opacity="0.9" filter="url(#b1)"/><path d="M118 72 C132 64 146 60 163 57 L163 64 C148 66 134 69 118 75Z" fill="#e2f5ff" opacity="0.8" filter="url(#b1)"/><path d="M128 52 C140 45 150 40 163 37" stroke="#a9dcff" stroke-width="2" fill="none" opacity="0.45" filter="url(#b1)"/><path d="M58 121 C78 131 95 138 112 137 C132 135 150 122 163 102" stroke="#5cb6ea" stroke-width="12" fill="none" opacity="0.4" filter="url(#b2)"/><path d="M58 121 C78 131 95 138 112 137 C132 135 150 122 163 102" stroke="#a6dfff" stroke-width="3.5" fill="none" opacity="0.85" filter="url(#b1)"/><path d="M90 120 C115 108 140 92 163 78" stroke="#8ad0f8" stroke-width="2.5" fill="none" opacity="0.75" filter="url(#b1)"/><path d="M112 126 C130 118 148 106 163 92" stroke="#bfe8ff" stroke-width="2.5" fill="none" opacity="0.6" filter="url(#b1)"/><path d="M0 126 C25 122 45 119 70 121" stroke="#9bd8ff" stroke-width="1" fill="none" opacity="0.6" filter="url(#b1)"/><path d="M0 142 C25 136 45 131 70 127" stroke="#9bd8ff" stroke-width="1" fill="none" opacity="0.5" filter="url(#b1)"/><g fill="#bfe6ff" opacity="0.8"><circle cx="10" cy="150" r="0.6"/><circle cx="35" cy="138" r="0.5"/><circle cx="120" cy="150" r="0.5"/><circle cx="140" cy="146" r="0.5"/><circle cx="100" cy="150" r="0.4"/><circle cx="145" cy="29" r="0.6"/><circle cx="28" cy="132" r="0.4"/><circle cx="50" cy="128" r="0.4"/></g><circle cx="157" cy="148" r="1.8" fill="#d8f4ff" opacity="0.85" filter="url(#b1)"/></svg></div>
<div class="r" style="left:1152px;top:471px;width:387px;height:1px;background:repeating-linear-gradient(to right,#c7c7c7 0 3px,transparent 3px 5px)"></div>
<div class="r" style="left:1152px;top:521px;width:387px;height:1px;background:repeating-linear-gradient(to right,#c7c7c7 0 3px,transparent 3px 5px)"></div>
<div class="r" style="left:1152px;top:570px;width:387px;height:1px;background:repeating-linear-gradient(to right,#c7c7c7 0 3px,transparent 3px 5px)"></div>
<div class="r" style="left:970px;top:620px;width:569px;height:1px;background:repeating-linear-gradient(to right,#c7c7c7 0 3px,transparent 3px 5px)"></div>
<div class="t " style="left:1157.60px;top:438.80px;font-size:13.28px;line-height:16px;font-weight:400;color:#000;font-family:'Liberation Serif', serif;"><span class="sp"><svg class="wv"><rect width="100%" height="4" fill="url(#wv)"/></svg>FlexAura</span></div>
<div class="t " style="left:1157.50px;top:489.20px;font-size:13.28px;line-height:16px;font-weight:400;color:#000;font-family:'Liberation Serif', serif;"><span class="sp"><svg class="wv"><rect width="100%" height="4" fill="url(#wv)"/></svg>Apt</span>. 772, 148 Allée, Voie de <span class="sp"><svg class="wv"><rect width="100%" height="4" fill="url(#wv)"/></svg>Caumartin</span>, 28266 Chambéry</div>
<div class="t " style="left:1157.50px;top:538.70px;font-size:13.28px;line-height:16px;font-weight:400;color:#000;font-family:'Liberation Serif', serif;"><span class="sp"><svg class="wv"><rect width="100%" height="4" fill="url(#wv)"/></svg>Siret</span> : <span class="sp"><svg class="wv"><rect width="100%" height="4" fill="url(#wv)"/></svg>123xxxxxx</span></div>
<div class="r" style="left:970px;top:620px;width:1px;height:25px;background:repeating-linear-gradient(to bottom,#c7c7c7 0 3px,transparent 3px 5px)"></div>
<div class="r" style="left:970px;top:645px;width:569px;height:1px;background:repeating-linear-gradient(to right,#c7c7c7 0 3px,transparent 3px 5px)"></div>
<div class="r" style="left:970px;top:680px;width:569px;height:1px;background:repeating-linear-gradient(to right,#c7c7c7 0 3px,transparent 3px 5px)"></div>
<div class="r" style="left:970px;top:716px;width:569px;height:1px;background:repeating-linear-gradient(to right,#c7c7c7 0 3px,transparent 3px 5px)"></div>
<div class="r" style="left:970px;top:752px;width:569px;height:1px;background:repeating-linear-gradient(to right,#c7c7c7 0 3px,transparent 3px 5px)"></div>
<div class="r" style="left:970px;top:787px;width:569px;height:1px;background:repeating-linear-gradient(to right,#c7c7c7 0 3px,transparent 3px 5px)"></div>
<div class="r" style="left:970px;top:645px;width:1px;height:142px;background:repeating-linear-gradient(to bottom,#c7c7c7 0 3px,transparent 3px 5px)"></div>
<div class="r" style="left:1538px;top:645px;width:1px;height:142px;background:repeating-linear-gradient(to bottom,#c7c7c7 0 3px,transparent 3px 5px)"></div>
<div class="t " style="left:976.20px;top:655.30px;font-size:13.28px;line-height:16px;font-weight:400;color:#000;font-family:'Liberation Serif', serif;">Clément&nbsp; <span class="sp"><svg class="wv"><rect width="100%" height="4" fill="url(#wv)"/></svg>Legrand</span></div>
<div class="t " style="left:976.20px;top:691.10px;font-size:13.28px;line-height:16px;font-weight:400;color:#000;font-family:'Liberation Serif', serif;"><span class="sp"><svg class="wv"><rect width="100%" height="4" fill="url(#wv)"/></svg>alexandre.andré</span>@<span class="sp"><svg class="wv"><rect width="100%" height="4" fill="url(#wv)"/></svg>FlexAura.com</span></div>
<div class="t " style="left:976.20px;top:726.20px;font-size:13.28px;line-height:16px;font-weight:400;color:#000;font-family:'Liberation Serif', serif;">Tél. : 01 97 43 80 97</div>
<div class="t" style="right:387.50px;top:653.10px;font-size:13.28px;line-height:16px;font-weight:400;color:#000;font-family:'Liberation Serif', serif">Mme Lucas Muller</div>
<div class="t" style="right:387.50px;top:689.20px;font-size:13.28px;line-height:16px;font-weight:400;color:#000;font-family:'Liberation Serif', serif"><span class="sp"><svg class="wv"><rect width="100%" height="4" fill="url(#wv)"/></svg>Apt</span>. 540, 370 Impasse <span class="sp"><svg class="wv"><rect width="100%" height="4" fill="url(#wv)"/></svg>Delesseux</span>, 45808 Argenteuil</div>
<div class="t" style="right:387.50px;top:724.20px;font-size:13.28px;line-height:16px;font-weight:400;color:#000;font-family:'Liberation Serif', serif">Tél. : +33 6 27 42 11 00</div>
<div class="t" style="right:387.50px;top:760.10px;font-size:13.28px;line-height:16px;font-weight:400;color:#000;font-family:'Liberation Serif', serif">Email : <span class="sp"><svg class="wv"><rect width="100%" height="4" fill="url(#wv)"/></svg>lucas.muller</span>@<span class="sp"><svg class="wv"><rect width="100%" height="4" fill="url(#wv)"/></svg>demo.com</span></div>
<div class="t" style="left:970px;width:569px;text-align:center;top:799.3px;font-size:26.2px;line-height:32px;font-weight:700;color:#212529;font-family:'Liberation Serif',serif">Devis</div>
<div class="t " style="left:969.90px;top:841.10px;font-size:13.28px;line-height:16px;font-weight:400;color:#212529;font-family:'Liberation Sans', sans-serif;">N° devis : <span class="sp"><svg class="wv"><rect width="100%" height="4" fill="url(#wv)"/></svg>D250919</span>-003-001</div>
<div class="t " style="left:969.90px;top:865.10px;font-size:13.28px;line-height:16px;font-weight:400;color:#212529;font-family:'Liberation Sans', sans-serif;">N° client : <span class="sp"><svg class="wv"><rect width="100%" height="4" fill="url(#wv)"/></svg>C250919</span>-003-005</div>
<div class="t " style="left:969.90px;top:889.10px;font-size:13.28px;line-height:16px;font-weight:400;color:#212529;font-family:'Liberation Sans', sans-serif;">Date : 19/09/2025</div>
<div class="t " style="left:969.90px;top:913.00px;font-size:13.28px;line-height:16px;font-weight:400;color:#212529;font-family:'Liberation Sans', sans-serif;">Devis valable 3 mois soit jusqu'au 19/12/2025</div>
<div class="r" style="left:970px;top:942px;width:569px;height:57px;background:#f2f2f2"></div>
<div class="r" style="left:970px;top:942px;width:569px;height:1px;background:#bfbfbf"></div>
<div class="r" style="left:970px;top:998px;width:569px;height:1px;background:#bfbfbf"></div>
<div class="r" style="left:970px;top:1034px;width:569px;height:1px;background:#bfbfbf"></div>
<div class="r" style="left:970px;top:1069px;width:569px;height:1px;background:#bfbfbf"></div>
<div class="r" style="left:970px;top:942px;width:1px;height:128px;background:#bfbfbf"></div>
<div class="r" style="left:1310px;top:942px;width:1px;height:128px;background:#bfbfbf"></div>
<div class="r" style="left:1380px;top:942px;width:1px;height:128px;background:#bfbfbf"></div>
<div class="r" style="left:1476px;top:942px;width:1px;height:128px;background:#bfbfbf"></div>
<div class="r" style="left:1538px;top:942px;width:1px;height:128px;background:#bfbfbf"></div>
<div class="t" style="left:970px;width:341px;text-align:center;top:960.50px;font-size:13.28px;line-height:16px;font-weight:700;color:#212529">Désignation</div>
<div class="t" style="left:1311px;width:70px;text-align:center;top:960.30px;font-size:13.28px;line-height:16px;font-weight:700;color:#212529">Quantité</div>
<div class="t" style="left:1380.2px;width:96.0px;text-align:center;top:950.80px;font-size:13.28px;line-height:16px;font-weight:700;color:#212529">Prix Unitaire</div>
<div class="t" style="left:1380.2px;width:96.0px;text-align:center;top:971.30px;font-size:13.28px;line-height:16px;font-weight:700;color:#212529">HT</div>
<div class="t" style="left:1476.2px;width:62.0px;text-align:center;top:950.80px;font-size:13.28px;line-height:16px;font-weight:700;color:#212529">Total</div>
<div class="t" style="left:1476.2px;width:62.0px;text-align:center;top:971.30px;font-size:13.28px;line-height:16px;font-weight:700;color:#212529">HT</div>
<div class="t " style="left:976.50px;top:1008.10px;font-size:13.28px;line-height:16px;font-weight:400;color:#212529;font-family:'Liberation Sans', sans-serif;">Fourniture</div>
<div class="t " style="left:976.50px;top:1044.20px;font-size:13.28px;line-height:16px;font-weight:400;color:#212529;font-family:'Liberation Sans', sans-serif;">Main d'oeuvre (en heure)</div>
<div class="t" style="left:1311px;width:70px;text-align:center;top:1006.30px;font-size:13.28px;line-height:16px;font-weight:400;color:#212529">4</div>
<div class="t" style="left:1380.2px;width:96.0px;text-align:center;top:1006.30px;font-size:13.28px;line-height:16px;font-weight:400;color:#212529">250</div>
<div class="t" style="left:1476.2px;width:62.0px;text-align:center;top:1006.30px;font-size:13.28px;line-height:16px;font-weight:400;color:#212529">1000 €</div>
<div class="t" style="left:1311px;width:70px;text-align:center;top:1042.10px;font-size:13.28px;line-height:16px;font-weight:400;color:#212529">20</div>
<div class="t" style="left:1380.2px;width:96.0px;text-align:center;top:1042.10px;font-size:13.28px;line-height:16px;font-weight:400;color:#212529">60</div>
<div class="t" style="left:1476.2px;width:62.0px;text-align:center;top:1042.10px;font-size:13.28px;line-height:16px;font-weight:400;color:#212529">1200 €</div>
</div>
</body></html>
